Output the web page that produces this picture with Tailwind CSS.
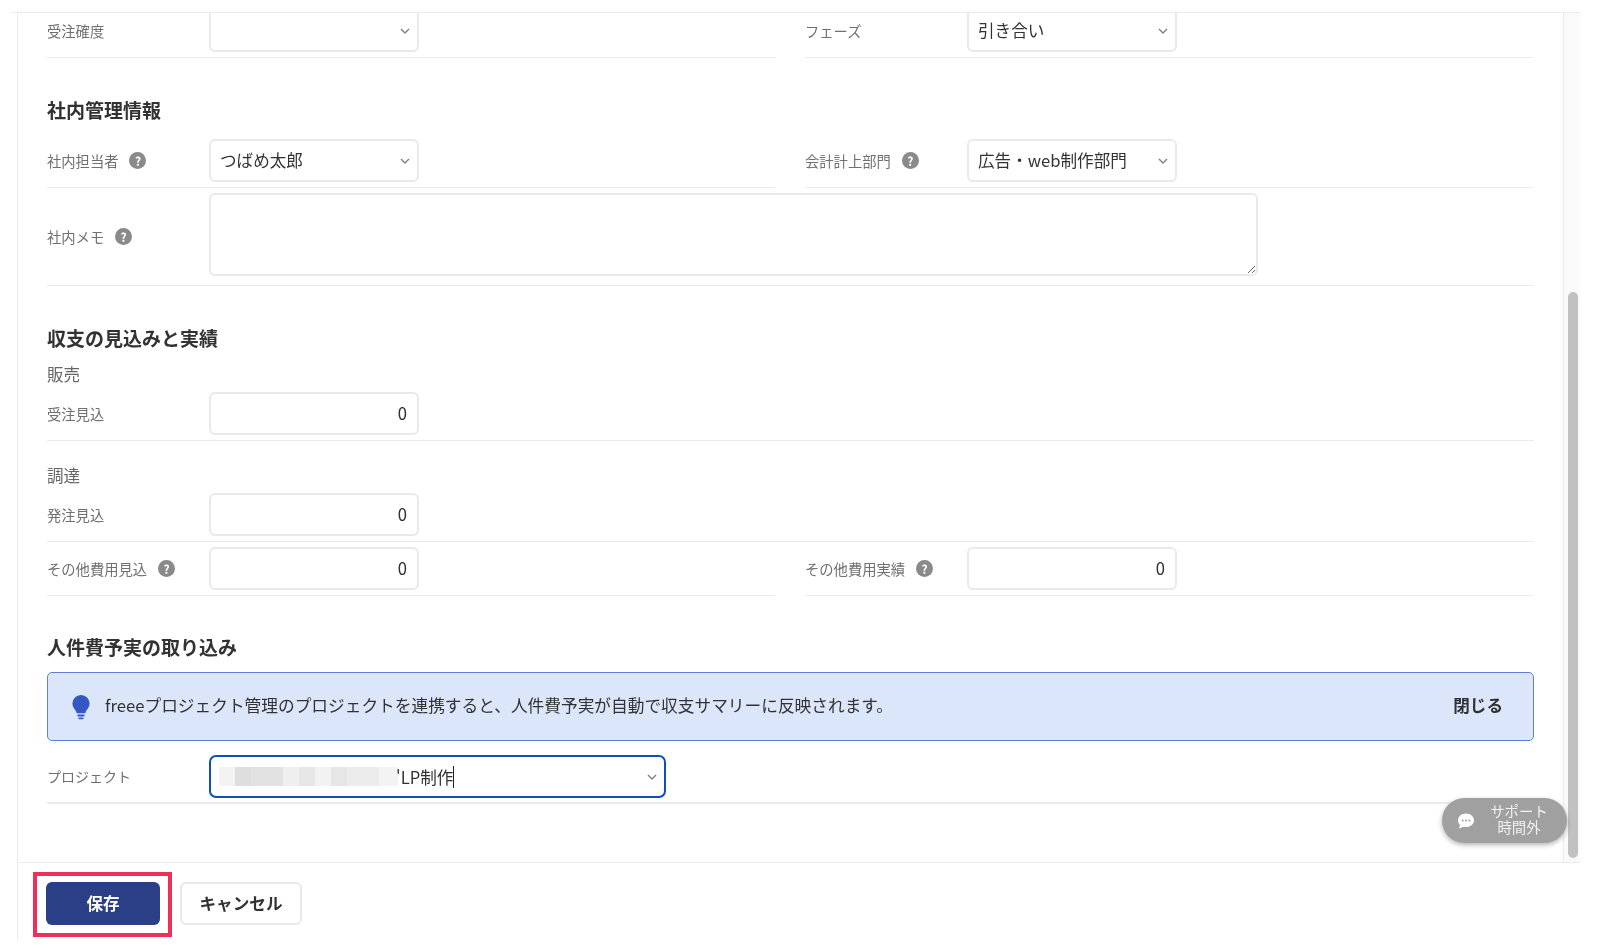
<!DOCTYPE html>
<html lang="ja">
<head>
<meta charset="utf-8">
<script src="https://cdn.jsdelivr.net/npm/@tailwindcss/browser@4"></script>
<title>案件編集</title>
</head>
<body class="bg-white">
<div class="relative w-[1600px] h-[949px] overflow-hidden bg-white blur-[0.35px] font-['Noto_Sans_CJK_JP','Noto_Sans',sans-serif] text-[#323232]">
  <div class="mt-3 ml-[11px] w-[1569px] border-t border-[#ebebeb] pl-[6px]">
    <div class="flex h-[849px] border-l border-[#ebebeb]">
      <main class="w-[1545px] overflow-hidden pl-[29px] pr-[29px]">
        <div class="-mt-[4px] grid grid-cols-[728px_728px] gap-x-[30px]">
          <div class="flex items-center border-b border-[#ebebeb] pb-[5px]">
            <span class="w-[162px] text-[14.3px] text-[#707070]">受注確度</span>
            <div class="flex h-[43px] w-[210px] items-center justify-between rounded-[6px] border-2 border-[#e9e9e9] bg-white pl-[9px] pr-[6px]"><span></span><svg class="h-[12px] w-[12px]" viewBox="0 0 12 12" fill="none" stroke="#808080" stroke-width="1.4"><path d="M2 4l4 4 4-4"/></svg></div>
          </div>
          <div class="flex items-center border-b border-[#ebebeb] pb-[5px]">
            <span class="w-[162px] text-[14.3px] text-[#707070]">フェーズ</span>
            <div class="flex h-[43px] w-[210px] items-center justify-between rounded-[6px] border-2 border-[#e9e9e9] bg-white pl-[9px] pr-[6px] text-[16.6px]"><span>引き合い</span><svg class="h-[12px] w-[12px]" viewBox="0 0 12 12" fill="none" stroke="#808080" stroke-width="1.4"><path d="M2 4l4 4 4-4"/></svg></div>
          </div>
        </div>

        <h2 class="mt-[38px] mb-[15px] h-[28px] text-[19px] leading-[28px] font-bold">社内管理情報</h2>
        <div class="grid grid-cols-[728px_728px] gap-x-[30px]">
          <div class="flex items-center border-b border-[#ebebeb] pb-[5px]">
            <span class="flex w-[162px] items-center text-[14.3px] text-[#707070]">社内担当者<span class="ml-[11px] flex h-[17px] w-[17px] items-center justify-center rounded-full bg-[#8a8a8a] text-[12px] font-bold text-white">?</span></span>
            <div class="flex h-[43px] w-[210px] items-center justify-between rounded-[6px] border-2 border-[#e9e9e9] bg-white pl-[9px] pr-[6px] text-[16.6px]"><span>つばめ太郎</span><svg class="h-[12px] w-[12px]" viewBox="0 0 12 12" fill="none" stroke="#808080" stroke-width="1.4"><path d="M2 4l4 4 4-4"/></svg></div>
          </div>
          <div class="flex items-center border-b border-[#ebebeb] pb-[5px]">
            <span class="flex w-[162px] items-center text-[14.3px] text-[#707070]">会計計上部門<span class="ml-[11px] flex h-[17px] w-[17px] items-center justify-center rounded-full bg-[#8a8a8a] text-[12px] font-bold text-white">?</span></span>
            <div class="flex h-[43px] w-[210px] items-center justify-between rounded-[6px] border-2 border-[#e9e9e9] bg-white pl-[9px] pr-[6px] text-[16.6px]"><span>広告・web制作部門</span><svg class="h-[12px] w-[12px]" viewBox="0 0 12 12" fill="none" stroke="#808080" stroke-width="1.4"><path d="M2 4l4 4 4-4"/></svg></div>
          </div>
        </div>
        <div class="flex items-center border-b border-[#ebebeb] pt-[5px] pb-[9px]">
          <span class="flex w-[162px] translate-y-[2px] items-center text-[14.3px] text-[#707070]">社内メモ<span class="ml-[11px] flex h-[17px] w-[17px] items-center justify-center rounded-full bg-[#8a8a8a] text-[12px] font-bold text-white">?</span></span>
          <textarea class="block h-[83px] w-[1049px] rounded-[6px] border-2 border-[#e9e9e9] bg-white" aria-label="社内メモ"></textarea>
        </div>

        <h2 class="mt-[38px] h-[28px] text-[19px] leading-[28px] font-bold">収支の見込みと実績</h2>
        <h3 class="mt-[10px] h-[24px] text-[16.6px] leading-[24px] font-normal text-[#666666]">販売</h3>
        <div class="mt-[6px] flex items-center border-b border-[#ebebeb] pb-[5px]">
          <span class="w-[162px] text-[14.3px] text-[#707070]">受注見込</span>
          <div class="flex h-[43px] w-[210px] items-center justify-end rounded-[6px] border-2 border-[#e9e9e9] bg-white pr-[10px] text-[16.6px]"><span>0</span></div>
        </div>
        <h3 class="mt-[22px] h-[24px] text-[16.6px] leading-[24px] font-normal text-[#666666]">調達</h3>
        <div class="mt-[6px] flex items-center border-b border-[#ebebeb] pb-[5px]">
          <span class="w-[162px] text-[14.3px] text-[#707070]">発注見込</span>
          <div class="flex h-[43px] w-[210px] items-center justify-end rounded-[6px] border-2 border-[#e9e9e9] bg-white pr-[10px] text-[16.6px]"><span>0</span></div>
        </div>
        <div class="grid grid-cols-[728px_728px] gap-x-[30px] pt-[5px]">
          <div class="flex items-center border-b border-[#ebebeb] pb-[5px]">
            <span class="flex w-[162px] items-center text-[14.3px] text-[#707070]">その他費用見込<span class="ml-[11px] flex h-[17px] w-[17px] items-center justify-center rounded-full bg-[#8a8a8a] text-[12px] font-bold text-white">?</span></span>
            <div class="flex h-[43px] w-[210px] items-center justify-end rounded-[6px] border-2 border-[#e9e9e9] bg-white pr-[10px] text-[16.6px]"><span>0</span></div>
          </div>
          <div class="flex items-center border-b border-[#ebebeb] pb-[5px]">
            <span class="flex w-[162px] items-center text-[14.3px] text-[#707070]">その他費用実績<span class="ml-[11px] flex h-[17px] w-[17px] items-center justify-center rounded-full bg-[#8a8a8a] text-[12px] font-bold text-white">?</span></span>
            <div class="flex h-[43px] w-[210px] items-center justify-end rounded-[6px] border-2 border-[#e9e9e9] bg-white pr-[10px] text-[16.6px]"><span>0</span></div>
          </div>
        </div>

        <h2 class="mt-[37px] h-[28px] text-[19px] leading-[28px] font-bold">人件費予実の取り込み</h2>
        <div class="mt-[11px] flex h-[69px] items-center justify-between rounded-[5px] border border-[#5f7fd6] bg-[#dce6fb] pl-[23px] pr-[30px]">
          <div class="flex items-center">
            <svg class="h-[26px] w-[20px]" viewBox="0 0 20 26" fill="#3358c4"><path d="M10 1a8.600 8.600 0 0 0-8.600 8.600c0 3.400 2 5.200 3.200 7 .6.900.9 1.700 1 2.600h8.800c.1-.9.4-1.700 1-2.600 1.200-1.800 3.200-3.600 3.200-7A8.600 8.600 0 0 0 10 1z"/><rect x="6.400" y="20.600" width="7.200" height="1.800" rx=".6"/><rect x="7.400" y="23.400" width="5.200" height="1.800" rx=".9"/></svg>
            <span class="ml-[14px] -translate-y-px text-[16.7px]">freeeプロジェクト管理のプロジェクトを連携すると、人件費予実が自動で収支サマリーに反映されます。</span>
          </div>
          <span class="-translate-y-px text-[16.6px] font-bold">閉じる</span>
        </div>
        <div class="mt-[14px] flex items-center border-b-2 border-[#ebebeb] pb-[4px]">
          <span class="w-[162px] text-[14px] text-[#707070]">プロジェクト</span>
          <div class="flex h-[43px] w-[457px] items-center justify-between rounded-[7px] border-[2.5px] border-[#0f4fb8] bg-white pl-[8px] pr-[6px] text-[16.6px]">
            <div class="flex items-center">
              <div class="flex h-[19px] w-[179px]">
                <span class="w-[16px] bg-[#f3f3f3]"></span><span class="w-[16px] bg-[#dedede]"></span><span class="w-[32px] bg-[#e2e2e2]"></span><span class="w-[16px] bg-[#efefef]"></span><span class="w-[16px] bg-[#e6e6e6]"></span><span class="w-[16px] bg-[#f2f2f2]"></span><span class="w-[16px] bg-[#e6e6e6]"></span><span class="w-[32px] bg-[#ececec]"></span><span class="w-[19px] bg-[#f3f3f3]"></span>
              </div>
              <span class="-ml-[2px] border-r border-[#222] leading-[22px]">'LP制作</span>
            </div>
            <svg class="h-[12px] w-[12px]" viewBox="0 0 12 12" fill="none" stroke="#808080" stroke-width="1.4"><path d="M2 4l4 4 4-4"/></svg>
          </div>
        </div>
      </main>
      <div class="w-[17px] shrink-0 border-l border-[#ebebeb] bg-[#fafafa] pt-[279px] pl-[4px]">
        <div class="h-[566px] w-[10px] rounded-full bg-[#c1c1c1]"></div>
      </div>
    </div>
    <footer class="flex h-[78px] items-start gap-[20px] border-t border-l border-[#ebebeb] pl-[28px] pt-[19px]">
      <button class="flex h-[43px] w-[114px] items-center justify-center rounded-[6px] bg-[#2a3f85] text-[16.6px] font-bold text-white">保存</button>
      <button class="flex h-[43px] w-[122px] items-center justify-center rounded-[6px] border-2 border-[#e9e9e9] bg-white text-[16.6px] font-bold text-[#323232]">キャンセル</button>
    </footer>
  </div>
  <div class="absolute left-[33px] top-[872px] h-[65px] w-[139px] border-[4px] border-[#ee2e5b]"></div>
  <div class="absolute left-[1442px] top-[798px] flex h-[45px] w-[125px] items-center rounded-full bg-[#a0a0a0] pl-[15px] shadow-[0_2px_5px_rgba(0,0,0,0.3)]">
    <svg class="h-[18px] w-[18px]" viewBox="0 0 18 18"><path fill="#fff" d="M9 1.500c4.400 0 8 2.900 8 6.800s-3.600 6.800-8 6.800c-.9 0-1.700-.1-2.500-.4L2 16.500l1-3.500C1.700 11.800 1 10.200 1 8.300 1 4.400 4.600 1.500 9 1.500z"/><circle cx="5.600" cy="8.500" r="1" fill="#a0a0a0"/><circle cx="9" cy="8.500" r="1" fill="#a0a0a0"/><circle cx="12.400" cy="8.500" r="1" fill="#a0a0a0"/></svg>
    <div class="ml-[13px] flex w-[62px] -translate-y-[2px] flex-col items-center text-[14.4px] leading-[16px] text-[#f0f0f0]"><span>サポート</span><span>時間外</span></div>
  </div>
</div>
</body>
</html>
